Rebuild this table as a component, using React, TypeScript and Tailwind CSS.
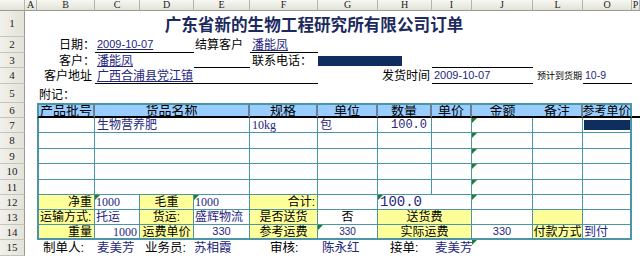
import React from "react";

const colHead = [
  { c: "col-start-1", t: "" },
  { c: "col-start-2", t: "A" },
  { c: "col-start-3", t: "B" },
  { c: "col-start-4", t: "C" },
  { c: "col-start-5", t: "D" },
  { c: "col-start-6", t: "E" },
  { c: "col-start-7", t: "F" },
  { c: "col-start-8", t: "G" },
  { c: "col-start-9", t: "H" },
  { c: "col-start-10", t: "I" },
  { c: "col-start-11", t: "J" },
  { c: "col-start-12", t: "L" },
  { c: "col-start-13", t: "O" },
  { c: "col-start-14", t: "P" },
];

const rowHead = [
  { r: "row-start-2", t: "1" },
  { r: "row-start-3", t: "2" },
  { r: "row-start-4", t: "3" },
  { r: "row-start-5", t: "4" },
  { r: "row-start-6", t: "5" },
  { r: "row-start-7", t: "6" },
  { r: "row-start-8", t: "7" },
  { r: "row-start-9", t: "8" },
  { r: "row-start-10", t: "9" },
  { r: "row-start-11", t: "10" },
  { r: "row-start-12", t: "11" },
  { r: "row-start-13", t: "12" },
  { r: "row-start-14", t: "13" },
  { r: "row-start-15", t: "14" },
  { r: "row-start-16", t: "15" },
];

const bodyRows = ["row-start-8", "row-start-9", "row-start-10", "row-start-11", "row-start-12"];

const base = "relative flex items-center overflow-hidden whitespace-nowrap";
const grid = "border-r border-b border-[#4b96a6]";
const navy = "text-[#26267e]";
const serif = "font-['Liberation_Serif','Noto_Sans_CJK_SC',serif]";
const mono = "font-['Liberation_Mono','Noto_Sans_CJK_SC',monospace]";
const hdr =
  "bg-[#99ccff] justify-center text-[13px] border-t-2 border-b-2 border-r-2 border-t-[#4b96a6] border-b-black border-r-[#6e7e8e]";
const Y = "bg-[#ffff99]";

function Tri() {
  return (
    <span className="absolute left-0 top-0 w-0 h-0 border-t-[5px] border-t-[#1f7f2a] border-r-[5px] border-r-transparent" />
  );
}

export default function App() {
  return (
    <div className="w-[640px] h-[256px] overflow-hidden bg-white grid grid-cols-[25px_12px_58px_45px_54px_56px_68px_60px_54px_40px_61px_50px_49px_8px] grid-rows-[11px_26px_16px_15px_16px_19px_15px_15px_16px_15px_16px_15px_15px_15px_15px_16px] text-[12px] leading-none text-black font-['Liberation_Sans','Noto_Sans_CJK_SC',sans-serif]">
      {/* column headers */}
      {colHead.map((h) => (
        <div
          key={h.c}
          className={
            h.c +
            " row-start-1 flex items-center justify-center bg-linear-to-b from-[#f8f8f3] to-[#e2e2d9] border-r border-b border-r-[#b4b4ac] border-b-[#9a9a92] text-[10px] text-[#222] " +
            serif
          }
        >
          {h.t}
        </div>
      ))}
      {/* row headers */}
      {rowHead.map((h) => (
        <div
          key={h.r}
          className={
            h.r +
            " col-start-1 flex items-center justify-center bg-linear-to-r from-[#f1f0ea] to-[#e4e3da] border-r border-b border-r-[#9a9a92] border-b-[#c4c4bc] text-[11px] text-[#222] " +
            serif
          }
        >
          {h.t}
        </div>
      ))}

      {/* Row 1 title */}
      <div className="row-start-2 col-start-4 col-span-8 flex items-center justify-center whitespace-nowrap font-['Noto_Sans_CJK_SC',sans-serif] font-bold text-[16.6px] text-[#1c2a5e]">
        广东省新的生物工程研究所有限公司订单
      </div>

      {/* Row 2 */}
      <div className={base + " row-start-3 col-start-3 justify-end"}>日期：</div>
      <div className={base + " row-start-3 col-start-4 col-span-2 border-b border-black pl-[2px] text-[11px] " + navy}>
        <span className="underline underline-offset-1">2009-10-07</span>
      </div>
      <div className={base + " row-start-3 col-start-6 pl-[1px]"}>结算客户</div>
      <div className={base + " row-start-3 col-start-7 border-b border-black pl-[2px] " + navy}>
        <span className="underline underline-offset-1">潘能凤</span>
      </div>

      {/* Row 3 */}
      <div className={base + " row-start-4 col-start-3 justify-end"}>客户：</div>
      <div className={base + " row-start-4 col-start-4 col-span-2 pl-[2px] " + navy}>
        <span className="underline underline-offset-1">潘能凤</span>
      </div>
      <div className="row-start-4 col-start-6 border-b border-black" />
      <div className={base + " row-start-4 col-start-7 pl-[2px]"}>联系电话：</div>
      <div className="row-start-4 col-start-8 col-span-2 flex items-center">
        <div className="w-[84px] h-[10px] bg-[#0f2d5e]" />
      </div>
      <div className="row-start-4 col-start-10 col-span-2 border-b border-black" />

      {/* Row 4 */}
      <div className={base + " row-start-5 col-start-3 justify-end pr-[3px]"}>客户地址</div>
      <div className={base + " row-start-5 col-start-4 col-span-4 border-b border-black pl-[2px] " + navy}>
        <span className="underline underline-offset-1">广西合浦县党江镇</span>
      </div>
      <div className={base + " row-start-5 col-start-8 col-span-2 justify-end pr-[2px]"}>发货时间</div>
      <div className={base + " row-start-5 col-start-10 col-span-2 border-b border-black pl-[2px] text-[11px] " + navy}>
        2009-10-07
      </div>
      <div className={base + " row-start-5 col-start-12 justify-end pr-[1px] text-[9px]"}>预计到货期</div>
      <div className={base + " row-start-5 col-start-13 border-b border-black pl-[2px] text-[10.5px] " + navy}>
        10-9
      </div>

      {/* Row 5 */}
      <div className={base + " row-start-6 col-start-3 pl-[2px] pt-[2px]"}>附记：</div>

      {/* Row 6 header */}
      <div className={base + " row-start-7 col-start-3 border-l-2 border-l-[#4b96a6] " + hdr}>产品批号</div>
      <div className={base + " row-start-7 col-start-4 col-span-3 " + hdr}>货品名称</div>
      <div className={base + " row-start-7 col-start-7 " + hdr}>规格</div>
      <div className={base + " row-start-7 col-start-8 " + hdr}>单位</div>
      <div className={base + " row-start-7 col-start-9 " + hdr}>数量</div>
      <div className={base + " row-start-7 col-start-10 " + hdr}>单价</div>
      <div
        className={
          base +
          " row-start-7 col-start-11 bg-[#99ccff] justify-center text-[13px] border-t-2 border-b-2 border-t-[#4b96a6] border-b-black"
        }
      >
        金额
      </div>
      <div className={base + " row-start-7 col-start-12 " + hdr}>备注</div>
      <div
        className={
          base +
          " row-start-7 col-start-13 bg-[#99ccff] justify-center text-[12px] border-t-2 border-b-2 border-r-2 border-t-[#4b96a6] border-b-black border-r-[#4b96a6]"
        }
      >
        参考单价
      </div>
      <div className="row-start-7 col-start-14 border-b-2 border-black" />

      {/* Rows 7-11 body */}
      {bodyRows.map((r, i) => (
        <React.Fragment key={r}>
          <div className={r + " col-start-3 border-l-2 " + grid} />
          <div className={base + " " + r + " col-start-4 col-span-3 pl-[2px] " + grid + " " + navy}>
            {i === 0 ? "生物营养肥" : ""}
          </div>
          <div className={base + " " + r + " col-start-7 pl-[2px] " + grid + " " + navy + " " + serif}>
            {i === 0 ? "10kg" : ""}
          </div>
          <div className={base + " " + r + " col-start-8 pl-[2px] " + grid + " " + navy}>{i === 0 ? "包" : ""}</div>
          <div className={base + " " + r + " col-start-9 justify-end pr-[4px] " + grid + " " + navy + " " + mono}>
            {i === 0 ? "100.0" : ""}
          </div>
          <div className={r + " col-start-10 " + grid} />
          <div className={"relative " + r + " col-start-11 " + grid}>
            <Tri />
          </div>
          <div className={r + " col-start-12 " + grid} />
          <div className={"flex items-center justify-center " + r + " col-start-13 border-b border-r-2 border-[#4b96a6]"}>
            {i === 0 ? <div className="w-[46px] h-[10px] bg-[#0f2d5e]" /> : null}
          </div>
        </React.Fragment>
      ))}

      {/* Row 12 */}
      <div className={base + " row-start-13 col-start-3 border-l-2 justify-end pr-[2px] " + grid + " " + Y}>净重</div>
      <div className={base + " row-start-13 col-start-4 pl-[1px] " + grid + " " + navy + " " + serif}>
        <Tri />
        1000
      </div>
      <div className={base + " row-start-13 col-start-5 justify-center " + grid + " " + Y}>毛重</div>
      <div className={base + " row-start-13 col-start-6 pl-[1px] " + grid + " " + navy + " " + serif}>
        <Tri />
        1000
      </div>
      <div className={base + " row-start-13 col-start-7 justify-end pr-[2px] " + grid + " " + Y}>合计:</div>
      <div className={"row-start-13 col-start-8 " + grid} />
      <div className={base + " row-start-13 col-start-9 col-span-2 pl-[2px] text-[14px] " + grid + " " + navy + " " + mono}>
        <Tri />
        100.0
      </div>
      <div className={"relative row-start-13 col-start-11 " + grid}>
        <Tri />
      </div>
      <div className={"row-start-13 col-start-12 " + grid} />
      <div className="row-start-13 col-start-13 border-b border-r-2 border-[#4b96a6]" />

      {/* Row 13 */}
      <div className={base + " row-start-14 col-start-3 border-l-2 pl-[1px] " + grid + " " + Y}>运输方式:</div>
      <div className={base + " row-start-14 col-start-4 pl-[1px] " + grid + " " + navy}>托运</div>
      <div className={base + " row-start-14 col-start-5 justify-center " + grid + " " + Y}>货运:</div>
      <div className={base + " row-start-14 col-start-6 pl-[1px] " + grid + " " + navy}>盛辉物流</div>
      <div className={base + " row-start-14 col-start-7 justify-center " + grid + " " + Y}>是否送货</div>
      <div className={base + " row-start-14 col-start-8 justify-center " + grid}>否</div>
      <div className={base + " row-start-14 col-start-9 col-span-2 justify-center " + grid + " " + Y}>送货费</div>
      <div className={"row-start-14 col-start-11 " + grid} />
      <div className={"row-start-14 col-start-12 " + grid + " " + Y} />
      <div className="row-start-14 col-start-13 border-b border-r-2 border-[#4b96a6]" />

      {/* Row 14 */}
      <div className={base + " row-start-15 col-start-3 border-l-2 border-r border-b-2 border-[#4b96a6] justify-end pr-[2px] " + Y}>
        重量
      </div>
      <div className={base + " row-start-15 col-start-4 border-r border-b-2 border-[#4b96a6] justify-end pr-[2px] " + navy + " " + serif}>
        1000
      </div>
      <div className={base + " row-start-15 col-start-5 border-r border-b-2 border-[#4b96a6] justify-center " + Y}>运费单价</div>
      <div className={base + " row-start-15 col-start-6 border-r border-b-2 border-[#4b96a6] justify-center text-[11px] " + navy}>
        330
      </div>
      <div className={base + " row-start-15 col-start-7 border-r border-b-2 border-[#4b96a6] justify-center " + Y}>参考运费</div>
      <div className={base + " row-start-15 col-start-8 border-r border-b-2 border-[#4b96a6] justify-center text-[10px] " + navy}>
        <Tri />
        330
      </div>
      <div className={base + " row-start-15 col-start-9 col-span-2 border-r border-b-2 border-[#4b96a6] justify-center " + Y}>
        实际运费
      </div>
      <div className={base + " row-start-15 col-start-11 border-r border-b-2 border-[#4b96a6] justify-center text-[11px] " + navy}>
        330
      </div>
      <div className={base + " row-start-15 col-start-12 border-r border-b-2 border-[#4b96a6] justify-center " + Y}>付款方式</div>
      <div className={base + " row-start-15 col-start-13 border-r-2 border-b-2 border-[#4b96a6] pl-[1px] " + navy}>到付</div>

      {/* Row 15 */}
      <div className={base + " row-start-16 col-start-3 pl-[6px] text-[12.5px]"}>制单人:</div>
      <div className={base + " row-start-16 col-start-4 pl-[2px] text-[12.5px] " + navy}>麦美芳</div>
      <div className={base + " row-start-16 col-start-5 pl-[5px] text-[12.5px]"}>业务员:</div>
      <div className={base + " row-start-16 col-start-6 pl-[0px] text-[12.5px] " + navy}>苏相霞</div>
      <div className={base + " row-start-16 col-start-7 pl-[20px] text-[12.5px]"}>审核:</div>
      <div className={base + " row-start-16 col-start-8 pl-[4px] text-[12.5px] " + navy}>陈永红</div>
      <div className={base + " row-start-16 col-start-9 pl-[12px] text-[12.5px]"}>接单:</div>
      <div className={base + " row-start-16 col-start-10 pl-[3px] text-[12.5px] " + navy}>麦美芳</div>
      <div className="relative row-start-16 col-start-11">
        <Tri />
      </div>
    </div>
  );
}
